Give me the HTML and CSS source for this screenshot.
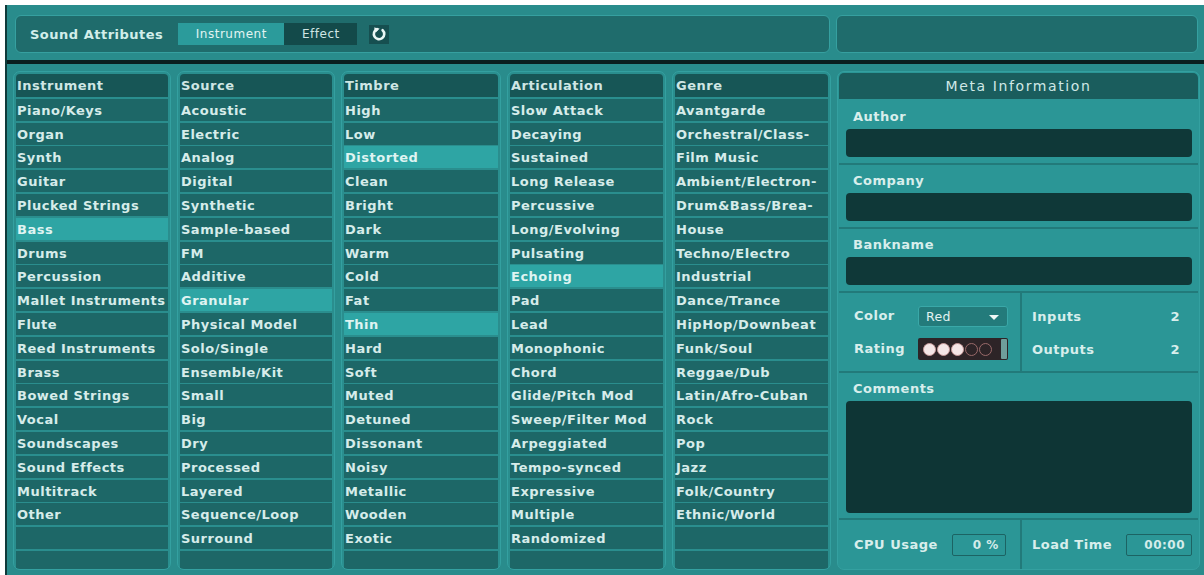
FILE: index.html
```html
<!DOCTYPE html>
<html>
<head>
<meta charset="utf-8">
<link rel="stylesheet" href="styles.css">
</head>
<body>
<div class="app">
  <div class="topbar">
    <div class="toppanel">
      <span class="title">Sound Attributes</span>
      <div class="segment">
        <span class="seg seg-on">Instrument</span>
        <span class="seg seg-off">Effect</span>
      </div>
      <span class="refresh">
        <svg width="16" height="16" viewBox="0 0 16 16">
          <path d="M6 3.2 A5.2 5.2 0 1 0 11.6 4.2" fill="none" stroke="#eaf7f5" stroke-width="2.6" stroke-linecap="round"/>
          <path d="M3 1.4 L8.6 2.6 L4.8 6.6 Z" fill="#eaf7f5"/>
        </svg>
      </span>
    </div>
    <div class="toppanel"></div>
  </div>
  <div class="main">
    <div class="col">
      <div class="head">Instrument</div>
      <div class="row">Piano/Keys</div>
      <div class="row">Organ</div>
      <div class="row">Synth</div>
      <div class="row">Guitar</div>
      <div class="row">Plucked Strings</div>
      <div class="row sel">Bass</div>
      <div class="row">Drums</div>
      <div class="row">Percussion</div>
      <div class="row">Mallet Instruments</div>
      <div class="row">Flute</div>
      <div class="row">Reed Instruments</div>
      <div class="row">Brass</div>
      <div class="row">Bowed Strings</div>
      <div class="row">Vocal</div>
      <div class="row">Soundscapes</div>
      <div class="row">Sound Effects</div>
      <div class="row">Multitrack</div>
      <div class="row">Other</div>
      <div class="row"></div>
      <div class="row"></div>
    </div>
    <div class="col">
      <div class="head">Source</div>
      <div class="row">Acoustic</div>
      <div class="row">Electric</div>
      <div class="row">Analog</div>
      <div class="row">Digital</div>
      <div class="row">Synthetic</div>
      <div class="row">Sample-based</div>
      <div class="row">FM</div>
      <div class="row">Additive</div>
      <div class="row sel">Granular</div>
      <div class="row">Physical Model</div>
      <div class="row">Solo/Single</div>
      <div class="row">Ensemble/Kit</div>
      <div class="row">Small</div>
      <div class="row">Big</div>
      <div class="row">Dry</div>
      <div class="row">Processed</div>
      <div class="row">Layered</div>
      <div class="row">Sequence/Loop</div>
      <div class="row">Surround</div>
      <div class="row"></div>
    </div>
    <div class="col">
      <div class="head">Timbre</div>
      <div class="row">High</div>
      <div class="row">Low</div>
      <div class="row sel">Distorted</div>
      <div class="row">Clean</div>
      <div class="row">Bright</div>
      <div class="row">Dark</div>
      <div class="row">Warm</div>
      <div class="row">Cold</div>
      <div class="row">Fat</div>
      <div class="row sel">Thin</div>
      <div class="row">Hard</div>
      <div class="row">Soft</div>
      <div class="row">Muted</div>
      <div class="row">Detuned</div>
      <div class="row">Dissonant</div>
      <div class="row">Noisy</div>
      <div class="row">Metallic</div>
      <div class="row">Wooden</div>
      <div class="row">Exotic</div>
      <div class="row"></div>
    </div>
    <div class="col">
      <div class="head">Articulation</div>
      <div class="row">Slow Attack</div>
      <div class="row">Decaying</div>
      <div class="row">Sustained</div>
      <div class="row">Long Release</div>
      <div class="row">Percussive</div>
      <div class="row">Long/Evolving</div>
      <div class="row">Pulsating</div>
      <div class="row sel">Echoing</div>
      <div class="row">Pad</div>
      <div class="row">Lead</div>
      <div class="row">Monophonic</div>
      <div class="row">Chord</div>
      <div class="row">Glide/Pitch Mod</div>
      <div class="row">Sweep/Filter Mod</div>
      <div class="row">Arpeggiated</div>
      <div class="row">Tempo-synced</div>
      <div class="row">Expressive</div>
      <div class="row">Multiple</div>
      <div class="row">Randomized</div>
      <div class="row"></div>
    </div>
    <div class="col">
      <div class="head">Genre</div>
      <div class="row">Avantgarde</div>
      <div class="row">Orchestral/Class-</div>
      <div class="row">Film Music</div>
      <div class="row">Ambient/Electron-</div>
      <div class="row">Drum&amp;Bass/Brea-</div>
      <div class="row">House</div>
      <div class="row">Techno/Electro</div>
      <div class="row">Industrial</div>
      <div class="row">Dance/Trance</div>
      <div class="row">HipHop/Downbeat</div>
      <div class="row">Funk/Soul</div>
      <div class="row">Reggae/Dub</div>
      <div class="row">Latin/Afro-Cuban</div>
      <div class="row">Rock</div>
      <div class="row">Pop</div>
      <div class="row">Jazz</div>
      <div class="row">Folk/Country</div>
      <div class="row">Ethnic/World</div>
      <div class="row"></div>
      <div class="row"></div>
    </div>
    <div class="meta">
      <div class="meta-head">Meta Information</div>
      <div class="sec sec-author">
        <div class="label">Author</div>
        <div class="field"></div>
      </div>
      <div class="sec">
        <div class="label">Company</div>
        <div class="field"></div>
      </div>
      <div class="sec">
        <div class="label">Bankname</div>
        <div class="field"></div>
      </div>
      <div class="sec sec-split">
        <div class="half half-left">
          <div class="kv">
            <span class="label">Color</span>
            <span class="dropdown">Red<span class="tri"></span></span>
          </div>
          <div class="kv">
            <span class="label">Rating</span>
            <span class="rating">
              <span class="dot on"></span><span class="dot on"></span><span class="dot on"></span><span class="dot"></span><span class="dot"></span>
              <span class="handle"></span>
            </span>
          </div>
        </div>
        <div class="half half-right">
          <div class="kv2"><span class="label">Inputs</span><span class="label">2</span></div>
          <div class="kv2"><span class="label">Outputs</span><span class="label">2</span></div>
        </div>
      </div>
      <div class="sec sec-comments">
        <div class="label">Comments</div>
        <div class="textarea"></div>
      </div>
      <div class="sec-bottom">
        <div class="half half-left stat">
          <span class="label">CPU Usage</span>
          <span class="box box-cpu">0 %</span>
        </div>
        <div class="half half-right stat">
          <span class="label">Load Time</span>
          <span class="box box-time">00:00</span>
        </div>
      </div>
    </div>
  </div>
</div>
</body>
</html>
```
FILE: styles.css
```css
* { box-sizing: border-box; }
html, body { margin: 0; padding: 0; background: #ffffff; }
body {
  font-family: "DejaVu Sans", "Liberation Sans", sans-serif;
  color: #d6ecea;
}
.app {
  margin: 5px 0 0 5px;
  width: 1199px;
  height: 570px;
  background: #298c8c;
  border-left: 2px solid #0f3a3a;
  display: flex;
  flex-direction: column;
}
.topbar {
  height: 59px;
  padding: 10px 6px 7px 8px;
  display: grid;
  grid-template-columns: 815px 1fr;
  column-gap: 6px;
  border-bottom: 4px solid #0a1e1e;
}
.toppanel {
  background: #1f6c6c;
  border: 1px solid #36a0a0;
  border-radius: 6px;
  display: flex;
  align-items: center;
  padding-left: 14px;
}
.title {
  font-weight: bold;
  font-size: 13px;
  letter-spacing: 0.5px;
  color: #d2eeea;
}
.segment {
  display: flex;
  margin-left: 15px;
  height: 22px;
}
.seg {
  font-size: 12px;
  letter-spacing: 0.5px;
  line-height: 22px;
  text-align: center;
}
.seg-on { width: 106px; background: #2b9b9b; color: #e2f4f2; }
.seg-off { width: 73px; background: #134a4a; color: #cfe6e4; }
.refresh {
  margin-left: 12px;
  width: 20px;
  height: 19px;
  background: #164f50;
  display: flex;
  align-items: center;
  justify-content: center;
}
.main {
  flex: 1;
  display: grid;
  grid-template-columns: 158px 158px 160px 159px 159px 1fr;
  column-gap: 6px;
  padding: 7px 4px 5px 6px;
  min-height: 0;
}
.col {
  display: flex;
  flex-direction: column;
  gap: 1.8px;
  padding: 2px 2px 0 2px;
  background: #2a8e8e;
  border: 1px solid #34a0a0;
  border-radius: 7px;
  overflow: hidden;
  min-height: 0;
}
.head, .row {
  flex: none;
  font-weight: bold;
  font-size: 13px;
  letter-spacing: 0.5px;
  padding-left: 1px;
  white-space: nowrap;
  overflow: hidden;
}
.head {
  height: 23px;
  line-height: 24px;
  background: #175656;
  border-radius: 4px 4px 0 0;
  color: #cfe6e4;
}
.row {
  height: 22px;
  line-height: 24px;
  background: #1d6767;
}
.row.sel { background: #2ea5a4; color: #dff4f2; }
.meta {
  display: flex;
  flex-direction: column;
  background: #2b9696;
  border: 1px solid #34a0a0;
  border-radius: 7px;
  padding: 1px 1px 0 1px;
  overflow: hidden;
}
.meta-head {
  height: 26px;
  line-height: 26px;
  text-align: center;
  background: #1a5d5d;
  border-radius: 5px 5px 0 0;
  font-size: 14px;
  letter-spacing: 1.6px;
  color: #cfe8e6;
}
.label {
  font-weight: bold;
  font-size: 13px;
  letter-spacing: 0.5px;
  color: #d8eeec;
}
.sec {
  flex: none;
  height: 64px;
  padding: 8px 6px 0 7px;
  border-bottom: 2px solid #227a7a;
}
.sec .label { display: block; line-height: 16px; padding-left: 7px; }
.sec-author { height: 66px; padding-top: 10px; }
.field {
  margin-top: 4px;
  height: 28px;
  background: #0f3838;
  border-radius: 4px;
}
.sec-split {
  height: 80px;
  padding: 0;
  display: flex;
}
.half { flex: none; }
.half-left {
  width: 183px;
  border-right: 2px solid #227a7a;
}
.half-right { flex: 1; }
.sec-split .half-left { padding: 12px 0 0 15px; }
.sec-split .half-right { padding: 16px 18px 0 10px; }
.kv {
  display: flex;
  align-items: center;
  height: 22px;
  margin-bottom: 11px;
}
.kv .label { display: inline-block; width: 64px; padding-left: 0; }
.kv2 {
  display: flex;
  justify-content: space-between;
  height: 16px;
  line-height: 16px;
  margin-bottom: 17px;
}
.kv2 .label { padding-left: 0; display: inline; }
.dropdown {
  position: relative;
  width: 90px;
  height: 21px;
  line-height: 20px;
  background: #237b7b;
  border: 1px solid #3aa8a8;
  border-radius: 3px;
  padding-left: 7px;
  font-size: 12.5px;
  letter-spacing: 0.4px;
  color: #e2f2f0;
}
.tri {
  position: absolute;
  right: 8px;
  top: 8px;
  width: 0;
  height: 0;
  border-left: 5px solid transparent;
  border-right: 5px solid transparent;
  border-top: 5px solid #eef8f6;
}
.rating {
  display: flex;
  align-items: center;
  gap: 1px;
  width: 90px;
  height: 22px;
  background: #2d2427;
  border-radius: 2px;
  padding-left: 5px;
}
.dot {
  width: 13px;
  height: 13px;
  border-radius: 50%;
  border: 1.5px solid #9a6a6a;
}
.dot.on { background: #f4e6e6; border-color: #c79a9a; }
.handle {
  margin-left: auto;
  width: 6px;
  height: 20px;
  background: #6f9e9b;
  border-radius: 1px;
  margin-right: 1px;
}
.sec-comments {
  height: 147px;
  padding-top: 8px;
}
.textarea {
  margin-top: 4px;
  height: 112px;
  background: #0e3535;
  border-radius: 4px;
}
.sec-bottom {
  flex: 1;
  display: flex;
}
.stat {
  display: flex;
  align-items: center;
}
.sec-bottom .half-left { padding-left: 15px; }
.sec-bottom .half-right { padding-left: 10px; }
.box {
  height: 22px;
  line-height: 20px;
  border: 1px solid #1c6363;
  border-radius: 2px;
  text-align: right;
  font-weight: bold;
  font-size: 12px;
  letter-spacing: 0.5px;
  color: #d4ecea;
  padding-right: 6px;
}
.box-cpu { width: 54px; margin-left: 14px; }
.box-time { width: 66px; margin-left: 14px; }
```
